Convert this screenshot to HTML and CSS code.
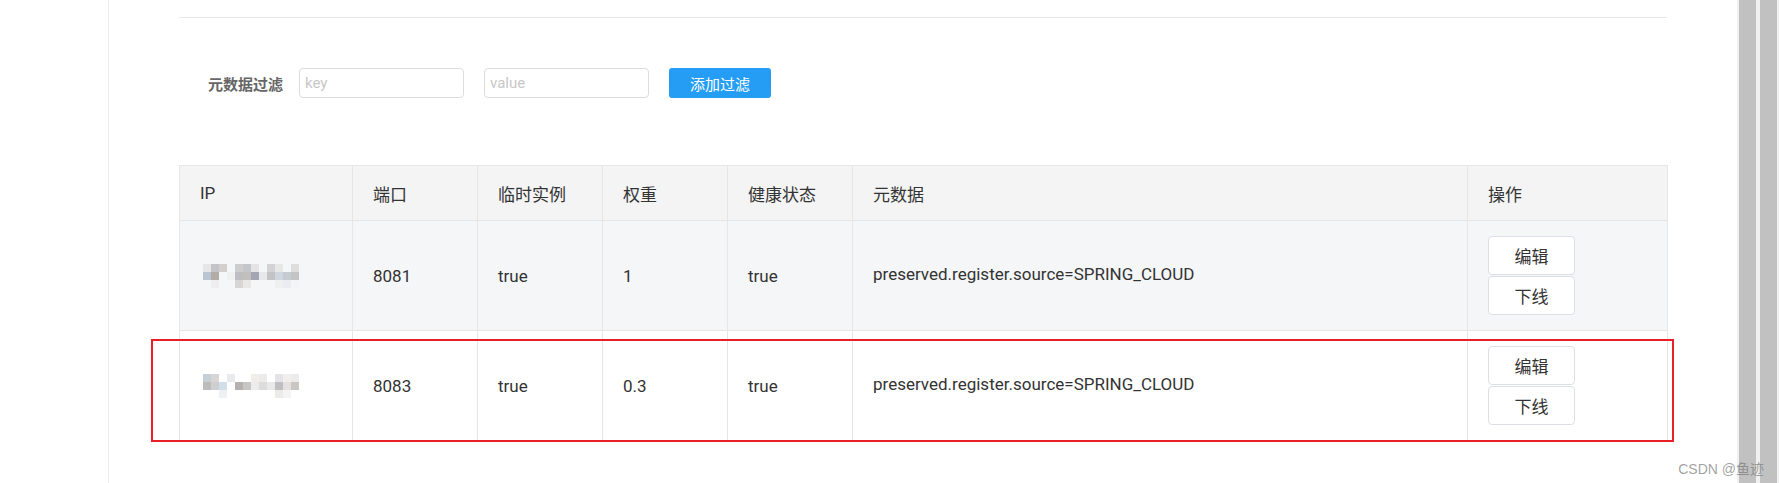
FILE: index.html
```
<html lang="zh-CN">
<head>
  <meta charset="UTF-8" />
  <title>服务详情</title>
  <link rel="stylesheet" href="styles.css">
</head>
<body>
  <div class="page">
    <div class="side"></div>
    <div class="content">
      <div class="divider"></div>

      <div class="filter">
        <label class="filter-label">元数据过滤</label>
        <input class="filter-input" placeholder="key">
        <input class="filter-input" placeholder="value">
        <button class="btn-primary">添加过滤</button>
      </div>

      <div class="table-wrap">
        <table class="inst-table">
          <colgroup>
            <col style="width:173px"><col style="width:125px"><col style="width:125px">
            <col style="width:125px"><col style="width:125px"><col style="width:615px"><col style="width:200px">
          </colgroup>
          <thead>
            <tr>
              <th>IP</th><th>端口</th><th>临时实例</th><th>权重</th><th>健康状态</th><th>元数据</th><th>操作</th>
            </tr>
          </thead>
          <tbody>
            <tr class="hover">
              <td>
                <!-- masked ip -->
                <svg class="mask" width="96" height="24" viewBox="0 0 96 24">
                  <rect x="0" y="0" width="8" height="8" fill="#e6e6e8"/><rect x="8" y="0" width="8" height="8" fill="#c4c4c8"/>
                  <rect x="16" y="0" width="8" height="8" fill="#d2cfcc"/><rect x="32" y="0" width="8" height="8" fill="#cdcdd0"/>
                  <rect x="40" y="0" width="8" height="8" fill="#c5c6c9"/><rect x="48" y="0" width="8" height="8" fill="#e4e4e6"/>
                  <rect x="64" y="0" width="8" height="8" fill="#d3d3d6"/><rect x="72" y="0" width="8" height="8" fill="#e7e7e8"/>
                  <rect x="88" y="0" width="8" height="8" fill="#dedede"/>
                  <rect x="0" y="8" width="8" height="8" fill="#b9c6d2"/><rect x="8" y="8" width="8" height="8" fill="#b3aba6"/>
                  <rect x="24" y="8" width="8" height="8" fill="#f0f0f2"/><rect x="32" y="8" width="8" height="8" fill="#bdbdc2"/>
                  <rect x="40" y="8" width="8" height="8" fill="#c1c0bd"/><rect x="48" y="8" width="8" height="8" fill="#a3a6b2"/>
                  <rect x="56" y="8" width="8" height="8" fill="#e8e8ea"/><rect x="64" y="8" width="8" height="8" fill="#c3c3c6"/>
                  <rect x="72" y="8" width="8" height="8" fill="#cfd6dd"/><rect x="80" y="8" width="8" height="8" fill="#c6cbd2"/>
                  <rect x="88" y="8" width="8" height="8" fill="#c4c4c4"/>
                  <rect x="8" y="16" width="8" height="8" fill="#eeeef0"/><rect x="32" y="16" width="8" height="8" fill="#d8d6d4"/>
                  <rect x="40" y="16" width="8" height="8" fill="#e9e8e6"/><rect x="72" y="16" width="8" height="8" fill="#eeeff1"/>
                  <rect x="80" y="16" width="8" height="8" fill="#eaecef"/><rect x="88" y="16" width="8" height="8" fill="#f3f4f6"/>
                </svg>
              </td>
              <td>8081</td>
              <td>true</td>
              <td>1</td>
              <td>true</td>
              <td class="meta">preserved.register.source=SPRING_CLOUD</td>
              <td class="ops">
                <button class="btn">编辑</button>
                <button class="btn">下线</button>
              </td>
            </tr>
            <tr>
              <td>
                <svg class="mask" width="100" height="24" viewBox="0 0 100 24">
                  <rect x="0" y="0" width="8" height="8" fill="#c6ced6"/><rect x="8" y="0" width="8" height="8" fill="#d7d6d5"/>
                  <rect x="24" y="0" width="8" height="8" fill="#e8eaee"/><rect x="48" y="0" width="8" height="8" fill="#f1ede8"/>
                  <rect x="56" y="0" width="8" height="8" fill="#ebebeb"/><rect x="72" y="0" width="8" height="8" fill="#e4e4e6"/>
                  <rect x="80" y="0" width="8" height="8" fill="#f0efee"/><rect x="88" y="0" width="8" height="8" fill="#ecebeb"/>
                  <rect x="0" y="8" width="8" height="8" fill="#bcbcbc"/><rect x="8" y="8" width="8" height="8" fill="#cfcfcf"/>
                  <rect x="16" y="8" width="8" height="8" fill="#d2dee8"/><rect x="32" y="8" width="8" height="8" fill="#b4b2b0"/>
                  <rect x="40" y="8" width="8" height="8" fill="#c8c6c4"/><rect x="48" y="8" width="8" height="8" fill="#ececed"/>
                  <rect x="56" y="8" width="8" height="8" fill="#dcdcdc"/><rect x="64" y="8" width="8" height="8" fill="#e9e9e9"/>
                  <rect x="72" y="8" width="8" height="8" fill="#bfbfc1"/><rect x="80" y="8" width="8" height="8" fill="#e4e2e0"/>
                  <rect x="88" y="8" width="8" height="8" fill="#c9c6c3"/>
                  <rect x="16" y="16" width="8" height="8" fill="#eef0f3"/><rect x="72" y="16" width="8" height="8" fill="#ecebea"/>
                  <rect x="80" y="16" width="8" height="8" fill="#f4f4f4"/>
                </svg>
              </td>
              <td>8083</td>
              <td>true</td>
              <td>0.3</td>
              <td>true</td>
              <td class="meta">preserved.register.source=SPRING_CLOUD</td>
              <td class="ops">
                <button class="btn">编辑</button>
                <button class="btn">下线</button>
              </td>
            </tr>
          </tbody>
        </table>
        <div class="mark"></div>
      </div>
    </div>
    <div class="scroll">
      <div class="thumb"></div>
      <div class="thumb"></div>
    </div>
  </div>
  <div class="watermark">CSDN @鱼迹</div>
</body>
</html>
```

FILE: styles.css
```
body { margin:0; background:#fff; font-family:Roboto, "Noto Sans CJK SC", sans-serif; color:#333; }
.page { display:flex; height:483px; width:1779px; overflow:hidden; }
.side { width:108px; border-right:1px solid #ececec; flex:none; }
.content { width:1488px; padding:0 70px; flex:none; }
.scroll { width:38px; padding:0 2px; display:flex; gap:4px; background:#f0f0f0; flex:none; }
.thumb { width:17px; background:#c1c1c1; }

.divider { height:17px; border-bottom:1px solid #e8e8e8; }

.filter { display:flex; align-items:center; margin-top:50px; padding-left:29px; height:30px; }
.filter-label { font-size:15px; font-weight:bold; color:#666; margin-right:16px; }
.filter-input {
  width:165px; height:30px; box-sizing:border-box; margin-right:20px;
  border:1px solid #dcdcdc; border-radius:4px; padding:0 5px;
  font:15px Roboto, sans-serif; color:#333; outline:none;
}
.filter-input::placeholder { color:#c8c8c8; }
.btn-primary {
  width:102px; height:30px; border:none; border-radius:3px; background:#259df4; color:#fff;
  font:15px "Noto Sans CJK SC", sans-serif; cursor:pointer;
}

.table-wrap { position:relative; margin-top:67px; }
.inst-table { width:1488px; table-layout:fixed; border-collapse:collapse; font-size:17px; }
.inst-table th, .inst-table td { border:1px solid #e6e6e6; padding:0 0 0 20px; text-align:left; }
.inst-table th { height:55px; background:#f4f4f5; font-weight:normal; }
.inst-table td { height:110px; }
.inst-table tr.hover td { background:#f5f6f8; }
.inst-table td.meta { padding-bottom:4px; }
.mask { display:block; margin-left:3px; }

.ops .btn { display:block; }
.btn {
  width:87px; height:39px; margin:0 0 1px; border:1px solid #dcdfe6; border-radius:4px; background:#fff;
  font:17px "Noto Sans CJK SC", sans-serif; color:#333; cursor:pointer;
}

.mark { position:absolute; left:-28px; top:174px; width:1523px; height:103px; box-sizing:border-box; border:2px solid #e81f27; }

.watermark {
  position:absolute; right:15px; top:458px; white-space:nowrap;
  font:14px "Liberation Sans", "Noto Sans CJK SC", sans-serif; color:rgba(120,120,120,0.7);
}
```
